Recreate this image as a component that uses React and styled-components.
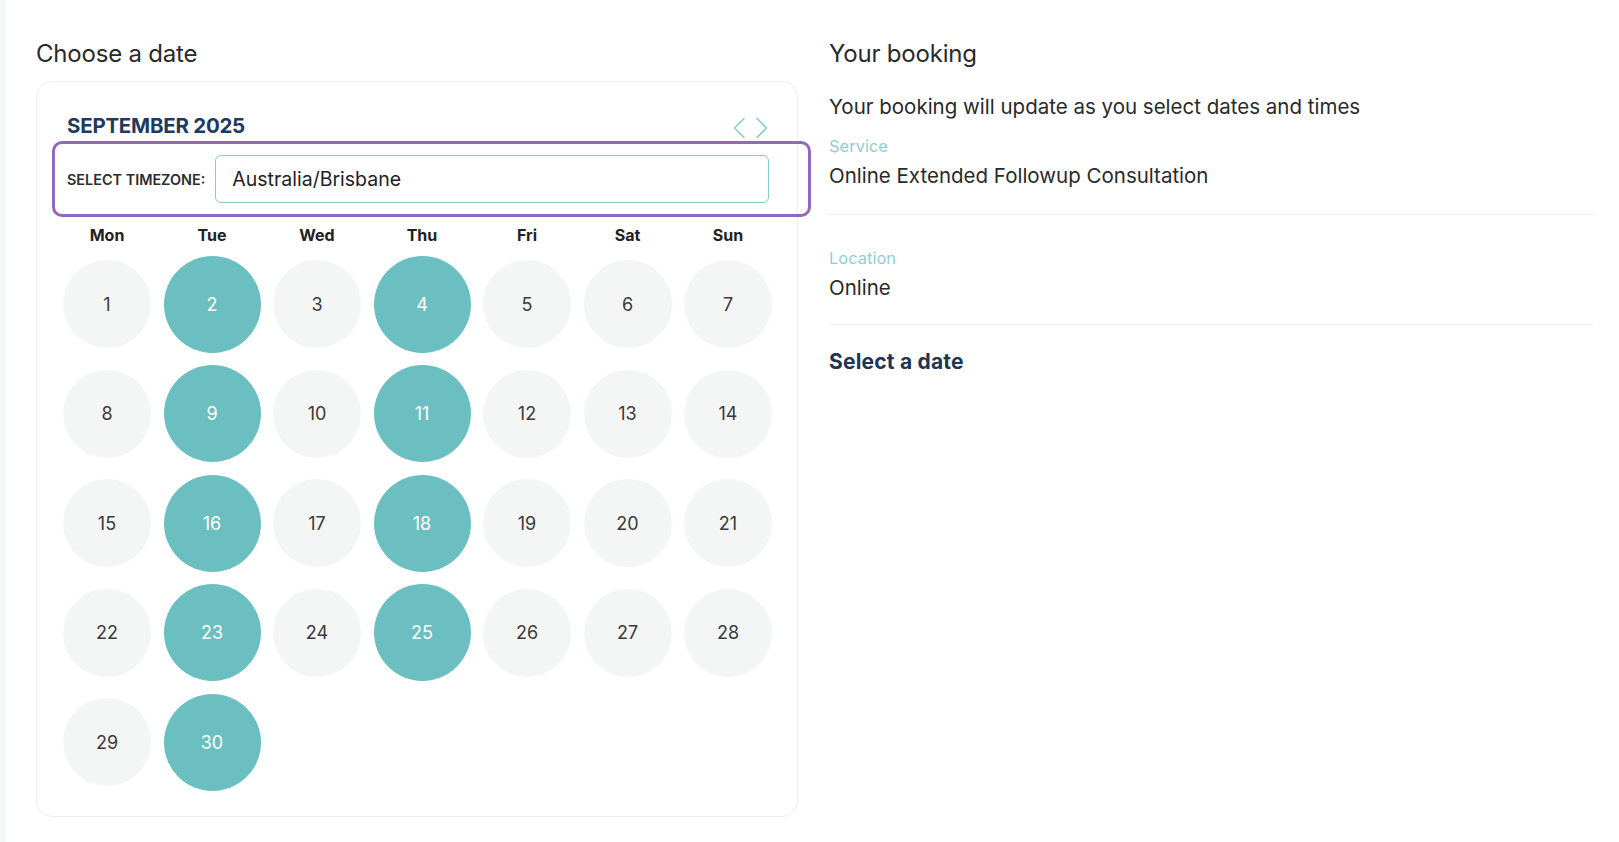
import React from "react";
import styled, { createGlobalStyle } from "styled-components";

const GlobalStyle = createGlobalStyle`
  html, body {
    margin: 0;
    padding: 0;
    background: #ffffff;
  }
  body {
    font-family: Inter, "Noto Sans", "Liberation Sans", sans-serif;
    color: #222;
    -webkit-font-smoothing: antialiased;
  }
  * { box-sizing: border-box; }
`;

const Page = styled.div`
  display: flex;
  min-height: 842px;
`;

const SideStrip = styled.div`
  width: 6px;
  flex: none;
  background: #f5f6f6;
`;

const Content = styled.main`
  flex: 1;
  display: grid;
  grid-template-columns: 762px 765px;
  column-gap: 31px;
  padding: 38px 0 0 30px;
  align-items: start;
`;

const Column = styled.section`
  display: flex;
  flex-direction: column;
`;

const SectionTitle = styled.h2`
  margin: 0;
  font-size: 24px;
  line-height: 32px;
  font-weight: 400;
  color: #2a2a2a;
  letter-spacing: -0.2px;
`;

const Card = styled.div`
  margin-top: 11px;
  border: 1px solid #eceff0;
  border-radius: 16px;
  padding: 32px 17px 25px 18px;
  display: flex;
  flex-direction: column;
`;

const CalHeader = styled.div`
  display: flex;
  justify-content: space-between;
  align-items: flex-end;
  padding: 0 12px 0 12px;
`;

const MonthTitle = styled.h3`
  margin: 0;
  font-size: 20.5px;
  line-height: 24px;
  font-weight: 700;
  color: #1e3a5c;
  letter-spacing: -0.25px;
`;

const NavButtons = styled.div`
  display: flex;
  gap: 11px;
  margin-bottom: -1px;
`;

const NavButton = styled.button`
  border: 0;
  padding: 0;
  background: transparent;
  width: 12px;
  height: 22px;
  cursor: pointer;
  display: block;
  svg { display: block; }
`;

const TimezoneBox = styled.div`
  margin: 3px -31px 0 -3px;
  border: 3px solid #9368ba;
  border-radius: 10px;
  padding: 11px 39px 11px 12px;
  display: flex;
  align-items: center;
  gap: 10px;
`;

const TimezoneLabel = styled.span`
  font-size: 14.4px;
  font-weight: 600;
  color: #2d2d2d;
  white-space: nowrap;
`;

const TimezoneInput = styled.div`
  flex: 1;
  height: 48px;
  border: 1.5px solid #86caca;
  border-radius: 6px;
  display: flex;
  align-items: center;
  padding-left: 16px;
  font-size: 19.5px;
  color: #222;
`;

const Grid = styled.div`
  margin-top: 8px;
  display: grid;
  grid-template-columns: repeat(7, auto);
  grid-template-rows: 18px;
  justify-content: center;
  align-items: center;
  column-gap: 12.5px;
  row-gap: 12.5px;
`;

const DayName = styled.div`
  align-self: start;
  text-align: center;
  font-size: 16px;
  line-height: 20px;
  font-weight: 700;
  color: #222;
`;

const Cell = styled.div`
  display: flex;
  align-items: center;
  justify-content: center;
`;

const DayCircle = styled.button`
  border: 0;
  padding: 0;
  border-radius: 50%;
  width: ${(p) => (p.$available ? "97px" : "88px")};
  height: ${(p) => (p.$available ? "97px" : "88px")};
  background: ${(p) => (p.$available ? "#6bbfc0" : "#f4f6f5")};
  color: ${(p) => (p.$available ? "#ffffff" : "#3a3a3a")};
  font-family: inherit;
  font-size: 18px;
  font-weight: 400;
  display: flex;
  align-items: center;
  justify-content: center;
  cursor: pointer;
`;

const Subtitle = styled.p`
  margin: 23px 0 0;
  font-size: 20.5px;
  line-height: 28px;
  color: #2a2a2a;
`;

const InfoBlock = styled.div`
  padding: ${(p) => p.$pad};
  border-bottom: 1px solid #eceeee;
  display: flex;
  flex-direction: column;
`;

const InfoLabel = styled.span`
  font-size: 16.5px;
  line-height: 22px;
  color: #8ed0cf;
`;

const InfoValue = styled.span`
  margin-top: 5px;
  font-size: 20.5px;
  line-height: 28px;
  color: #2a2a2a;
`;

const SelectPrompt = styled.h3`
  margin: 24px 0 0;
  font-size: 21px;
  line-height: 26px;
  font-weight: 700;
  color: #1f3652;
  letter-spacing: 0.2px;
`;

const Chevron = ({ dir }) => (
  <svg width="12" height="22" viewBox="0 0 12 22" fill="none">
    <path
      d={dir === "left" ? "M11 1.5 L1.5 11 L11 20.5" : "M1 1.5 L10.5 11 L1 20.5"}
      stroke="#86cccb"
      strokeWidth="1.6"
      strokeLinecap="round"
      strokeLinejoin="round"
    />
  </svg>
);

const dayNames = ["Mon", "Tue", "Wed", "Thu", "Fri", "Sat", "Sun"];
const days = Array.from({ length: 30 }, (_, i) => i + 1);
const isAvailable = (d) => {
  const col = (d - 1) % 7;
  return col === 1 || (col === 3 && d <= 25);
};

export default function App() {
  return (
    <>
      <GlobalStyle />
      <Page>
        <SideStrip />
        <Content>
          <Column>
            <SectionTitle>Choose a date</SectionTitle>
            <Card>
              <CalHeader>
                <MonthTitle>SEPTEMBER 2025</MonthTitle>
                <NavButtons>
                  <NavButton aria-label="Previous month">
                    <Chevron dir="left" />
                  </NavButton>
                  <NavButton aria-label="Next month">
                    <Chevron dir="right" />
                  </NavButton>
                </NavButtons>
              </CalHeader>
              <TimezoneBox>
                <TimezoneLabel>SELECT TIMEZONE:</TimezoneLabel>
                <TimezoneInput>Australia/Brisbane</TimezoneInput>
              </TimezoneBox>
              <Grid>
                {dayNames.map((n) => (
                  <DayName key={n}>{n}</DayName>
                ))}
                {days.map((d) => (
                  <Cell key={d}>
                    <DayCircle $available={isAvailable(d)}>{d}</DayCircle>
                  </Cell>
                ))}
              </Grid>
            </Card>
          </Column>
          <Column>
            <SectionTitle>Your booking</SectionTitle>
            <Subtitle>Your booking will update as you select dates and times</Subtitle>
            <InfoBlock $pad="14px 0 24px">
              <InfoLabel>Service</InfoLabel>
              <InfoValue>Online Extended Followup Consultation</InfoValue>
            </InfoBlock>
            <InfoBlock $pad="32px 0 22px">
              <InfoLabel>Location</InfoLabel>
              <InfoValue>Online</InfoValue>
            </InfoBlock>
            <SelectPrompt>Select a date</SelectPrompt>
          </Column>
        </Content>
      </Page>
    </>
  );
}
